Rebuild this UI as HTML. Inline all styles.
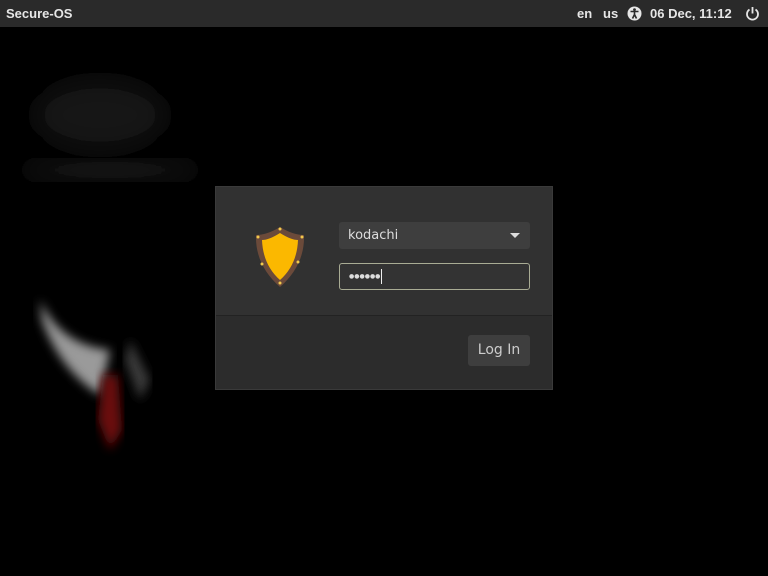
<!DOCTYPE html>
<html><head><meta charset="utf-8"><style>
*{margin:0;padding:0;box-sizing:border-box}
body{width:768px;height:576px;background:#000;overflow:hidden;position:relative;font-family:"Liberation Sans",sans-serif}
#bar{position:absolute;left:0;top:0;width:768px;height:27px;background:#2a2a2a;color:#e6e6e6;font-weight:bold;font-size:13px}
#bar span{position:absolute;top:6px}
#dlg{position:absolute;left:215px;top:186px;width:338px;height:204px;background:#313131;border:1px solid #3a3a3a}
#sep{position:absolute;left:0;top:128px;width:336px;height:1px;background:#222}
#bot{position:absolute;left:0;top:129px;width:336px;height:73px;background:#2c2c2c}
.f{position:absolute;left:123px;width:191px;height:27px;border-radius:3px;font-size:13px;color:#ddd;font-family:"DejaVu Sans",sans-serif}
#user{top:35px;background:#3e3e3e;padding:6px 9px}
#pw{top:76px;background:#333;border:1px solid #a9ac94;padding:5px 9px;font-size:6px;letter-spacing:0}
#btn{position:absolute;left:252px;top:148px;width:62px;height:31px;background:#3e3e3e;border-radius:3px;color:#ccc;font-size:14px;text-align:center;line-height:31px;font-family:"DejaVu Sans",sans-serif}
</style></head><body>
<svg width="768" height="576" style="position:absolute;left:0;top:0">
<defs><filter id="b"><feGaussianBlur stdDeviation="12"/></filter><filter id="b2"><feGaussianBlur stdDeviation="5"/></filter></defs>
<ellipse cx="100" cy="115" rx="65" ry="35" fill="#121212" filter="url(#b)"/>
<ellipse cx="110" cy="170" rx="90" ry="10" fill="#1e1e1e" filter="url(#b)"/>
<path d="M40 300 Q60 345 110 350 L100 395 Q60 370 42 320 Z" fill="#9a9a9a" filter="url(#b2)"/>
<path d="M130 340 L150 380 L140 400 L125 360 Z" fill="#3a3a3a" filter="url(#b2)"/>
<path d="M103 375 L118 375 L122 430 L110 450 L98 420 Z" fill="#6a0a0a" filter="url(#b2)"/>
</svg>
<div id="bar"><span style="left:6px">Secure-OS</span><span style="left:577px">en</span><span style="left:603px">us</span>
<svg style="position:absolute;left:627px;top:6px" width="15" height="15" viewBox="0 0 15 15"><circle cx="7.5" cy="7.5" r="7" fill="#e6e6e6"/><circle cx="7.5" cy="3.6" r="1.4" fill="#2a2a2a"/><path d="M3.5 5.5H11.5M7.5 5.5V8.5L5.5 12.5M7.5 8.5L9.5 12.5" stroke="#2a2a2a" stroke-width="1.6" fill="none"/></svg>
<span style="left:650px">06 Dec, 11:12</span>
<svg style="position:absolute;left:745px;top:6px" width="15" height="15" viewBox="0 0 15 15"><path d="M4.5 3.5A5.5 5.5 0 1 0 10.5 3.5" stroke="#e6e6e6" stroke-width="1.8" fill="none"/><path d="M7.5 1V7.5" stroke="#e6e6e6" stroke-width="1.8"/></svg></div>
<div id="dlg">
<svg style="position:absolute;left:37px;top:38px" width="54" height="64" viewBox="0 0 54 64"><path d="M27 2 Q14 10 3 10 Q2 40 27 62 Q52 40 51 10 Q40 10 27 2Z" fill="#6b4a3a"/><path d="M27 8 Q16 15 9 15 Q10 40 27 55 Q44 40 45 15 Q38 15 27 8Z" fill="#fbb800"/><g fill="#f2c94c"><circle cx="27" cy="4" r="1.5"/><circle cx="5" cy="12" r="1.5"/><circle cx="49" cy="12" r="1.5"/><circle cx="9" cy="39" r="1.5"/><circle cx="45" cy="37" r="1.5"/><circle cx="27" cy="58" r="1.5"/></g></svg>
<div id="user" class="f">kodachi<svg style="position:absolute;left:171px;top:11px" width="10" height="6"><path d="M0 0H10L5 5Z" fill="#ddd"/></svg></div>
<div id="pw" class="f"><span style="vertical-align:middle">●●●●●●</span><span style="display:inline-block;width:1px;height:15px;background:#eee;vertical-align:middle;margin-left:1px"></span></div>
<div id="sep"></div><div id="bot"></div>
<div id="btn">Log In</div>
</div>
</body></html>
